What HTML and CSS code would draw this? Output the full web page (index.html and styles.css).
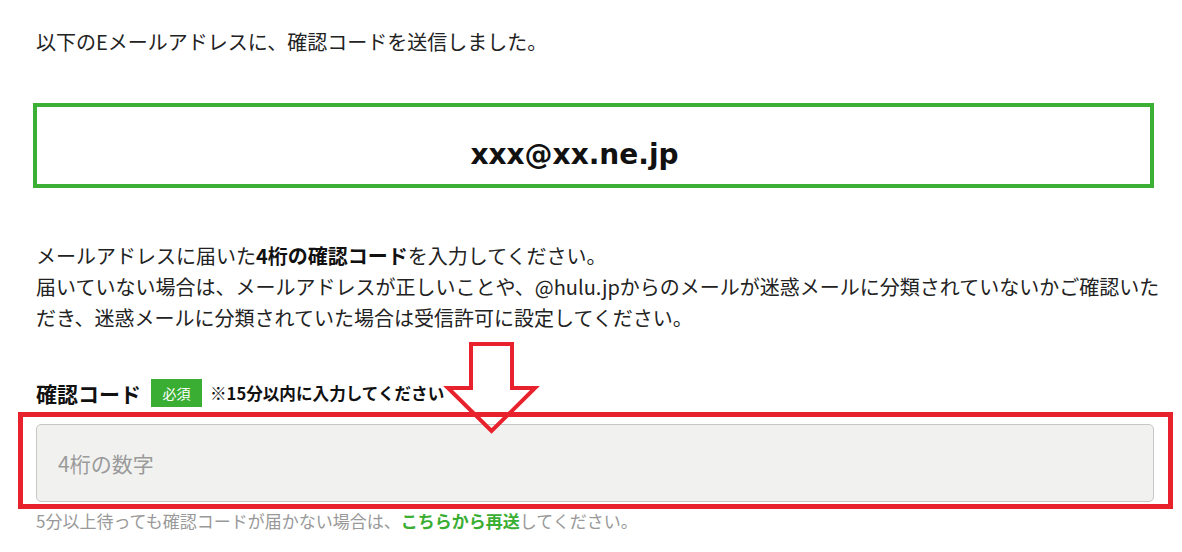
FILE: index.html
```html
<!DOCTYPE html>
<html lang="ja">
<head>
  <meta charset="UTF-8" />
  <meta name="viewport" content="width=device-width, initial-scale=1" />
  <title>確認コードの入力</title>
  <link rel="stylesheet" href="styles.css">
</head>
<body>
  <main class="page">
    <p class="lead">以下のEメールアドレスに、確認コードを送信しました。</p>

    <div class="email-box">xxx@xx.ne.jp</div>

    <p class="note">
      メールアドレスに届いた<strong>4桁の確認コード</strong>を入力してください。<br>
      届いていない場合は、メールアドレスが正しいことや、@hulu.jpからのメールが迷惑メールに分類されていないかご確認いただき、迷惑メールに分類されていた場合は受信許可に設定してください。
    </p>

    <!-- 入力フォーム -->
    <div class="label-row">
      <span class="label">確認コード</span>
      <span class="badge">必須</span>
      <span class="limit">※15分以内に入力してください</span>
    </div>

    <div class="field">
      <input class="code-input" type="text" placeholder="4桁の数字" />
      <span class="highlight"></span>
    </div>

    <p class="hint">5分以上待っても確認コードが届かない場合は、<a href="#" class="resend">こちらから再送</a>してください。</p>

    <svg class="arrow" width="104" height="104" viewBox="0 0 104 104">
      <polygon points="31,8 72,8 72,52 95,52 51.5,95 8,52 31,52" fill="none" stroke="#e8222c" stroke-width="4" stroke-linejoin="miter" />
    </svg>
  </main>
</body>
</html>
```

FILE: styles.css
```css
body {
  margin: 0;
  font-family: "Noto Sans CJK JP", sans-serif;
  background: #fff;
  color: #222;
}

.page {
  position: relative;
  padding: 26px 28px 0 36px;
}

.lead {
  margin: 0;
  font-size: 20px;
  line-height: 32px;
}

/* メールアドレス */
.email-box {
  margin: 45px 0 0 -3px;
  border: 4px solid #3cb035;
  padding: 31px 38px 12px 0;
  text-align: center;
  font-family: "DejaVu Sans", sans-serif;
  font-weight: bold;
  font-size: 28px;
  line-height: 34px;
  color: #111;
}

.note {
  margin: 52px -20px 0 0;
  font-size: 20px;
  line-height: 31px;
}

.note strong {
  font-weight: bold;
  color: #111;
}

/* ラベル */
.label-row {
  display: flex;
  align-items: center;
  height: 28px;
  margin-top: 46px;
}

.label {
  font-size: 21px;
  font-weight: bold;
  color: #111;
}

.badge {
  margin-left: 10px;
  width: 51px;
  height: 28px;
  display: flex;
  align-items: center;
  justify-content: center;
  background: #3aae33;
  color: #fff;
  font-size: 14px;
}

.limit {
  margin-left: 8px;
  font-size: 16.6px;
  font-weight: bold;
  color: #111;
}

/* 入力欄 */
.field {
  position: relative;
  margin-top: 17px;
}

.code-input {
  display: block;
  box-sizing: border-box;
  width: 100%;
  height: 78px;
  padding: 0 21px;
  border: 1px solid #c6c8c5;
  border-radius: 5px;
  background: #f1f2f0;
  font-family: "Noto Sans CJK JP", sans-serif;
  font-size: 21px;
  color: #333;
}

.code-input::placeholder {
  color: #9a9a9a;
}

.highlight {
  position: absolute;
  top: -12px;
  right: -19px;
  bottom: -7px;
  left: -18px;
  border: 5px solid #e8222c;
  pointer-events: none;
}

.hint {
  margin: 7px 0 0;
  font-size: 17px;
  line-height: 24px;
  color: #999;
}

.resend {
  color: #3aae33;
  font-weight: bold;
  text-decoration: none;
}

.arrow {
  position: absolute;
  left: 440px;
  top: 336px;
}
```
